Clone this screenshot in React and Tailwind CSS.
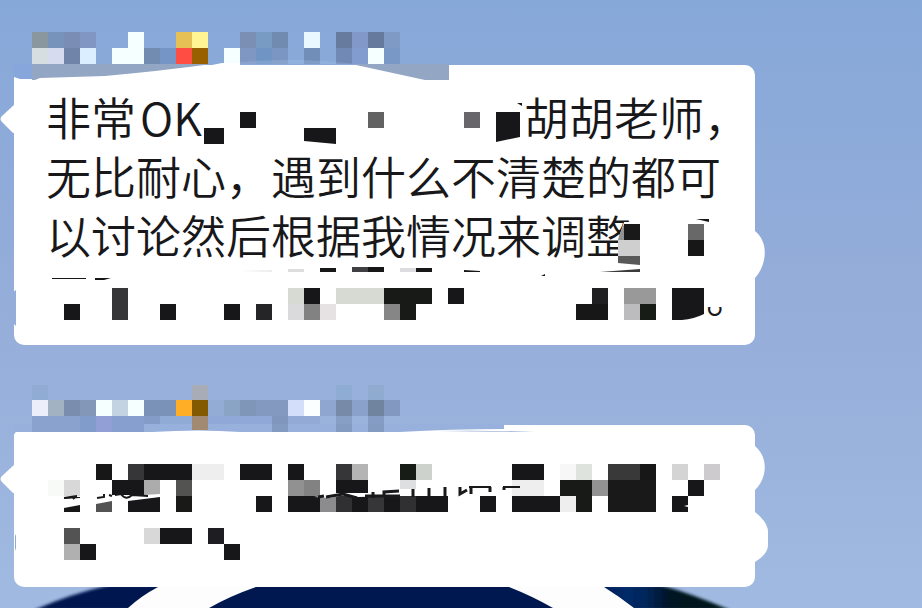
import React from "react";

const FIRST_NAME_TILES = [
  [32, 32, 16, 16, "#8b979f"], [48, 32, 16, 16, "#7893bb"], [64, 32, 16, 16, "#7a8db5"], [80, 32, 16, 16, "#8296c3"],
  [128, 32, 16, 16, "#f5ffff"], [176, 32, 16, 16, "#e6c054"], [192, 32, 16, 16, "#fff592"],
  [240, 32, 16, 16, "#7b8fb5"], [256, 32, 16, 16, "#789bc4"], [272, 32, 16, 16, "#718bb0"], [304, 32, 16, 16, "#e9f7ff"],
  [336, 32, 16, 16, "#667b9e"], [352, 32, 16, 16, "#8298c9"], [368, 32, 16, 16, "#667a9e"], [384, 32, 16, 16, "#7f9ac4"],
  [32, 48, 16, 16, "#d6dee2"], [48, 48, 16, 16, "#d6dbf0"], [64, 48, 16, 16, "#7083a9"], [80, 48, 16, 16, "#dbeeff"],
  [112, 48, 32, 16, "#f5ffff"], [144, 48, 16, 16, "#718cb0"], [160, 48, 16, 16, "#7595c6"],
  [176, 48, 16, 16, "#ff4d44"], [192, 48, 16, 16, "#996000"], [224, 48, 16, 16, "#f5ffff"],
  [240, 48, 16, 16, "#7e97c3"], [256, 48, 16, 16, "#7094c4"], [272, 48, 16, 16, "#7b96c3"], [304, 48, 16, 16, "#718eb9"],
  [336, 48, 16, 16, "#7089b5"], [352, 48, 16, 16, "#829cd0"], [368, 48, 16, 16, "#f5ffff"], [384, 48, 16, 16, "#7a98c6"],
];

const SECOND_NAME_TILES = [
  [32, 385, 16, 15, "#90acd5"], [192, 385, 16, 15, "#a8acb7"], [336, 385, 16, 15, "#8facd5"], [368, 385, 16, 15, "#8facd0"],
  [32, 400, 16, 16, "#eceef9"], [48, 400, 16, 16, "#a3b2c3"], [64, 400, 16, 16, "#7a8dae"], [80, 400, 16, 16, "#8397b8"],
  [96, 400, 16, 16, "#f5ffff"], [112, 400, 16, 16, "#c3d3e1"], [128, 400, 16, 16, "#f5ffff"], [144, 400, 32, 16, "#7a92b7"],
  [176, 400, 16, 16, "#ffae26"], [192, 400, 16, 16, "#835a00"], [208, 400, 16, 16, "#93acd6"], [224, 400, 16, 16, "#8aa4c6"],
  [240, 400, 16, 16, "#8096b9"], [256, 400, 32, 16, "#8399bf"], [288, 400, 16, 16, "#d3defb"], [304, 400, 16, 16, "#fafeff"],
  [320, 400, 16, 16, "#8fa6d1"], [336, 400, 16, 16, "#778ba8"], [352, 400, 16, 16, "#8aa2cb"], [368, 400, 16, 16, "#70849f"],
  [384, 400, 16, 16, "#8298c1"],
  [32, 416, 48, 16, "#8aa3ce"], [80, 416, 16, 16, "#819cca"], [96, 416, 16, 16, "#929fd7"], [112, 416, 32, 16, "#869fce"],
  [144, 416, 16, 16, "#849dc8"], [160, 416, 32, 16, "#8fabd6"], [192, 416, 16, 16, "#a18972"],
  [208, 416, 64, 16, "#8fa8d7"], [272, 416, 16, 16, "#8096bc"], [288, 416, 32, 16, "#93aad7"],
  [336, 416, 16, 16, "#879fc5"], [368, 416, 16, 16, "#859cc4"],
];

const FIRST_BODY_TILES = [
  [204, 128, 20, 16, "#171719"], [240, 112, 16, 16, "#171719"], [368, 112, 16, 16, "#626262"], [464, 112, 16, 16, "#68656b"],
  [624, 224, 16, 16, "#19191a"], [618, 240, 22, 16, "#cfcfd0"], [688, 224, 16, 16, "#686868"], [688, 240, 16, 16, "#171717"],
  [288, 269, 16, 3, "#dddddd"], [320, 268, 16, 4, "#171717"], [352, 267, 16, 5, "#404042"], [368, 267, 16, 5, "#171717"],
  [400, 268, 16, 4, "#dddddf"], [416, 268, 16, 4, "#171717"],
  [112, 288, 16, 32, "#363638"], [288, 288, 16, 16, "#d6dad3"], [304, 288, 16, 16, "#171719"], [336, 288, 48, 16, "#d6dad3"],
  [384, 288, 48, 16, "#171a17"], [448, 288, 16, 16, "#171719"], [592, 288, 16, 16, "#202023"], [624, 288, 32, 16, "#99999a"],
  [64, 304, 16, 16, "#171719"], [160, 304, 16, 16, "#171719"], [224, 304, 16, 16, "#171719"], [256, 304, 16, 16, "#252528"],
  [288, 304, 16, 16, "#dadadc"], [304, 304, 16, 16, "#828282"], [320, 304, 16, 16, "#e6e1e3"], [384, 304, 16, 16, "#868686"],
  [400, 304, 16, 16, "#171a17"], [576, 304, 32, 16, "#171717"], [624, 304, 16, 16, "#bcbcbe"], [640, 304, 16, 16, "#171c17"],
];

const SECOND_BODY_TILES = [
  [96, 464, 16, 16, "#171717"], [128, 464, 16, 16, "#363638"], [144, 464, 48, 16, "#171719"], [192, 464, 32, 16, "#eeeeee"],
  [240, 464, 32, 16, "#171719"], [288, 464, 16, 16, "#171719"], [336, 464, 16, 16, "#363638"], [352, 464, 16, 16, "#b4b4b5"],
  [400, 464, 16, 16, "#171c17"], [416, 464, 16, 16, "#cdd2cd"], [512, 464, 32, 16, "#171719"], [560, 464, 16, 16, "#f7f7f7"],
  [576, 464, 16, 16, "#dfe3de"], [608, 464, 32, 16, "#393939"], [640, 464, 16, 16, "#171717"], [672, 464, 16, 16, "#d4d4d5"],
  [704, 464, 16, 16, "#cdcbce"],
  [48, 480, 16, 16, "#f8faf7"], [64, 480, 16, 16, "#d8d8d8"], [112, 480, 32, 15, "#171719"], [144, 480, 16, 16, "#acacad"],
  [176, 480, 16, 16, "#535351"], [288, 480, 16, 16, "#919191"], [304, 480, 16, 16, "#828283"], [336, 480, 32, 13, "#171719"],
  [400, 480, 16, 9, "#dedfe0"], [512, 480, 32, 16, "#eeeeef"], [560, 480, 32, 16, "#171a17"], [592, 480, 16, 16, "#929292"],
  [608, 480, 48, 32, "#191919"], [688, 480, 16, 16, "#171719"],
  [64, 497, 16, 15, "#171717"], [96, 499, 16, 13, "#535353"], [128, 496, 32, 16, "#171719"], [176, 496, 16, 16, "#191a17"],
  [256, 496, 16, 16, "#171719"], [288, 496, 32, 16, "#171719"], [320, 496, 16, 16, "#8c8c8e"], [336, 496, 16, 16, "#303032"],
  [352, 496, 16, 16, "#171719"], [368, 496, 16, 16, "#363638"], [384, 496, 16, 16, "#171719"], [400, 496, 16, 16, "#303032"],
  [416, 496, 32, 16, "#171719"], [480, 496, 16, 16, "#171719"], [512, 496, 48, 16, "#171719"], [560, 496, 16, 16, "#eeeeef"],
  [576, 496, 16, 16, "#171a17"], [672, 496, 16, 16, "#171719"],
  [64, 528, 16, 16, "#535353"], [144, 528, 16, 16, "#d8d8d8"], [160, 528, 32, 16, "#171719"], [208, 528, 16, 16, "#1e1e22"],
  [64, 544, 16, 16, "#b0b0b0"], [80, 544, 16, 16, "#171719"], [224, 544, 16, 16, "#171719"],
];

function Tiles({ items }) {
  return (
    <g shapeRendering="crispEdges">
      {items.map(([x, y, w, h, fill]) => (
        <rect key={`${x}-${y}`} x={x} y={y} width={w} height={h} fill={fill} />
      ))}
    </g>
  );
}

function Tail() {
  return (
    <svg className="absolute top-10 -left-[14px] h-7 w-[15px]" viewBox="0 0 15 28" fill="#fff" aria-hidden="true">
      <path d="M15 -1 L2 11 Q-1 14 2 17 L15 30 Z" />
    </svg>
  );
}

function FirstMessage() {
  return (
    <article>
      <svg className="block h-[33px] w-[400px] overflow-visible" viewBox="0 32 400 33" aria-hidden="true">
        <Tiles items={FIRST_NAME_TILES} />
      </svg>
      <div className="relative ml-[14px] mr-[167px] rounded-[10px] bg-white pt-[22px] pr-6 pb-[22px] pl-8 text-[45px] leading-[59px] text-[#18181a]">
        <Tail />
        <div className="flex justify-between whitespace-nowrap">
          <span className="flex gap-1">
            <span>非常</span>
            <span>OK</span>
          </span>
          <span className="-mr-[18px]">胡胡老师，</span>
        </div>
        <p>无比耐心，遇到什么不清楚的都可</p>
        <p>以讨论然后根据我情况来调整</p>
        <p className="-mr-5 text-right">。</p>
        <svg className="absolute top-0 left-0 h-[280px] w-[741px] overflow-visible" viewBox="14 65 741 280" aria-hidden="true">
          <path d="M13 64 H33 V79 H20 L14 77 Z" fill="#87a6db" />
          <path d="M32 64 H212 Q160 71 105 76 L40 78 L35 80 H32 Z" fill="#93a6c4" />
          <path d="M356 65 L425 80 H449 V64 H356 Z" fill="#93a6c4" />
          <path d="M240 64 V62 Q300 57 356 64 Z" fill="#a9c8ec" opacity=".25" />
          <path d="M212 65 L222 63 H240 V65 Z" fill="#fff" />
          <path d="M13 292 L16 290 V326 L13 323 Z" fill="#93aeda" />
          <path d="M755 231 C768 241 768 263 755 278 Z" fill="#fff" />
          <path d="M624 222 H646 V262 H618 V240 Z" fill="#fff" />
          <path d="M619 236 L624 224 V240 H618 Z" fill="#929293" />
          <rect x="700" y="290" width="40" height="17" fill="#fff" />
          <Tiles items={FIRST_BODY_TILES} />
          <g fill="#171719">
            <path d="M304 128 H336 V144 L304 141 Z" />
            <path d="M496 112 H520 V137 L496 142 Z" />
            <path d="M517 103 H522 V106 Z" />
            <path d="M696 219 L709 219 V222 Z" />
            <path d="M618 256 H640 V265 L618 263 Z" fill="#59595a" />
            <path d="M600 272 L640 269 V272 Z" fill="#3b3b3c" />
            <path d="M464 270 L480 271 V272 H464 Z" />
            <path d="M541 276 L545 274 V276 Z" />
            <path d="M52 278 H86 V279 H52 Z M95 278 L111 278 L104 280 H95 Z" />
            <path d="M672 288 H704 V314 Q694 319 682 320 H672 Z" />
          </g>
          <path d="M240 271 L272 270 V272 Z" fill="#ededed" />
        </svg>
      </div>
    </article>
  );
}

function SecondMessage() {
  return (
    <article>
      <svg className="block h-10 w-[400px] overflow-visible" viewBox="0 385 400 40" aria-hidden="true">
        <Tiles items={SECOND_NAME_TILES} />
      </svg>
      <div className="relative ml-[14px] mr-[167px] h-[162px] rounded-[10px] bg-white">
        <Tail />
        <svg className="absolute top-0 left-0 h-[162px] w-[741px] overflow-visible" viewBox="14 425 741 162" aria-hidden="true">
          <path d="M13 424 H504 V429 Q450 429 400 432 H240 Q200 429 152 432 H16 L13 435 Z" fill="#98b0dc" />
          <g shapeRendering="crispEdges">
            <path d="M32 424 H80 V432 H32 Z" fill="#8aa3ce" />
            <path d="M80 424 H96 V432 H80 Z" fill="#819cca" />
            <path d="M96 424 H112 V432 H96 Z" fill="#929fd7" />
            <path d="M112 424 H144 V432 H112 Z" fill="#869fce" />
            <path d="M192 424 H208 V430 H192 Z" fill="#a18972" />
            <path d="M272 424 H288 V432 H272 Z M336 424 H352 V432 H336 Z M368 424 H384 V432 H368 Z" fill="#839ac1" />
          </g>
          <path d="M437 431 Q490 430 535 432 Z" fill="#859dcb" />
          <path d="M755 446 C768 457 768 477 755 490 Z" fill="#fff" />
          <path d="M755 512 Q768 522 768 532 V545 Q768 554 755 562 Z" fill="#fff" />
          <path d="M15 536 L16 534 V551 L15 548 Z" fill="#8eacd0" />
          <Tiles items={SECOND_BODY_TILES} />
          <path d="M64 499 L80 498 V505 L64 508 Z M96 498 L112 497 V501 L96 504 Z M128 496 L160 494 V497 L128 501 Z" fill="#fff" />
          <g fill="none" stroke="#19191b" strokeWidth="2">
            <path d="M64 498 L77 496 M73 499 L76 496 M97 498 L104 497 V494 M109 495 L112 496 M115 495 L121 494 Q126 501 132 495 M132 495 L148 496" />
          </g>
          <path d="M314 497 L338 493 L368 493 L400 489 V496 L358 497 L344 495 L330 498 Z" fill="#fff" />
          <g fill="none" stroke="#19191b" strokeWidth="3">
            <path d="M318 497 L324 496 M326 497 L343 494 L357 498 M365 496 H400 M373 492 V498 M384 497 V492 L399 491" />
            <path d="M413 489 V497 M429 488 V497 M445 487 V497 M460 487 V494 L467 490 M471 494 V487 M490 487 V492 M504 490 V487" />
            <path d="M469 487 H491 M503 487 H520" strokeWidth="2" />
          </g>
          <path d="M684 506 L688 505 V507 Z" fill="#fff" />
        </svg>
      </div>
    </article>
  );
}

function Backdrop() {
  return (
    <svg className="block h-[21px] w-[922px]" viewBox="0 587 922 21" aria-hidden="true">
      <defs>
        <linearGradient id="rim" x1="0" x2="1">
          <stop offset="0" stopColor="#001c55" />
          <stop offset=".2" stopColor="#002a68" />
          <stop offset=".35" stopColor="#00265a" />
          <stop offset=".55" stopColor="#001220" />
          <stop offset="1" stopColor="#02141c" />
        </linearGradient>
        <filter id="edge" x="-5%" y="-50%" width="110%" height="200%">
          <feGaussianBlur stdDeviation="1.5" />
        </filter>
      </defs>
      <path d="M34 610 Q70 594 110 585 H170 V610 Z" fill="#001750" filter="url(#edge)" />
      <path d="M600 585 H660 Q690 593 730 610 H600 Z" fill="url(#rim)" filter="url(#edge)" />
      <path d="M128 608 Q141 596 158 587 H604 Q620 597 634 608 Z" fill="#fdfdfd" />
      <path d="M209 608 Q230 596 256 587 H509 Q532 596 553 608 Z" fill="#001850" />
    </svg>
  );
}

export default function App() {
  return (
    <main
      lang="zh-CN"
      className="flex min-h-screen flex-col gap-10 overflow-hidden bg-linear-to-b from-[#86a8d9] via-[#95add9] to-[#a0bae1] pt-8 font-['Noto_Sans_CJK_SC',sans-serif] font-[350]"
    >
      <FirstMessage />
      <div>
        <SecondMessage />
        <Backdrop />
      </div>
    </main>
  );
}
